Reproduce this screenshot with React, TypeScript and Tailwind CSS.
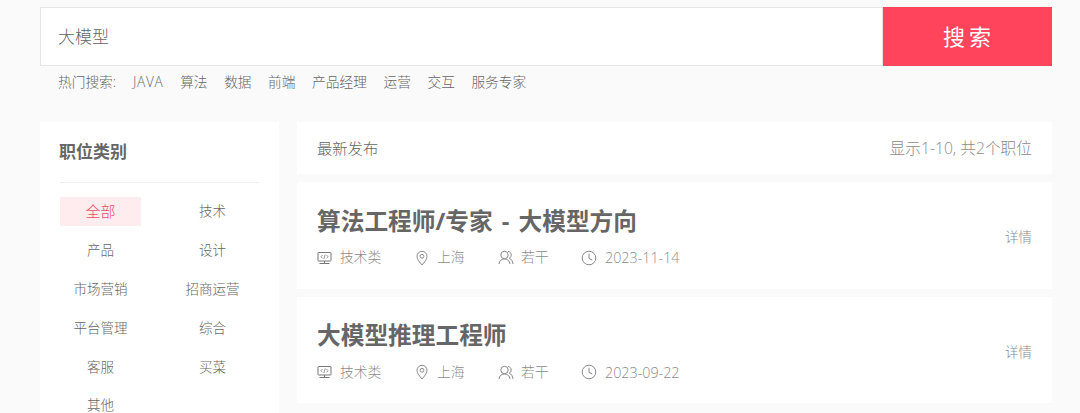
import React from 'react';

const hotWords = ['算法', '数据', '前端', '产品经理', '运营', '交互', '服务专家'];
const categories = ['全部', '技术', '产品', '设计', '市场营销', '招商运营', '平台管理', '综合', '客服', '买菜', '其他'];
const jobs = [
  { title: '算法工程师/专家 - 大模型方向', date: '2023-11-14' },
  { title: '大模型推理工程师', date: '2023-09-22' },
];

function MonitorIcon() {
  return (
    <svg width="15" height="14" viewBox="0 0 15 14" fill="none" stroke="#777" strokeWidth="1" className="mr-2 shrink-0">
      <rect x="1" y="1.5" width="13" height="8.5" rx="0.5" />
      <path d="M5.5 4 L4 5.7 L5.5 7.4 M9.5 4 L11 5.7 L9.5 7.4 M8.2 3.5 L6.8 8" strokeWidth="0.8" />
      <path d="M7.5 10 V12 M2.5 12.5 H12.5" />
    </svg>
  );
}

function PinIcon() {
  return (
    <svg width="14" height="16" viewBox="0 0 14 16" fill="none" stroke="#888" strokeWidth="1" className="mr-2 shrink-0">
      <path d="M7 15 C4.5 12 2 9.5 2 6.3 A5 5 0 0 1 12 6.3 C12 9.5 9.5 12 7 15 Z" />
      <circle cx="7" cy="6.3" r="1.9" />
    </svg>
  );
}

function UsersIcon() {
  return (
    <svg width="16" height="15" viewBox="0 0 16 15" fill="none" stroke="#888" strokeWidth="1" className="mr-[7px] shrink-0">
      <circle cx="6.5" cy="5" r="3.7" />
      <path d="M1 14 C1.4 10.8 3.4 9 6.5 9 C9.6 9 11.6 10.8 12 14" />
      <path d="M10 1.4 C12.2 1.6 13.2 3.2 13.2 5 C13.2 6.4 12.5 7.6 11.3 8.2 C13.4 9 14.7 11 15 14" />
    </svg>
  );
}

function ClockIcon() {
  return (
    <svg width="16" height="16" viewBox="0 0 16 16" fill="none" stroke="#888" strokeWidth="1" className="mr-2 shrink-0">
      <circle cx="8" cy="8" r="6.8" />
      <path d="M8 3.8 V8.4 L11.2 10" />
    </svg>
  );
}

function JobCard({ title, date }: { title: string; date: string }) {
  return (
    <div className="flex h-[106.5px] items-center justify-between bg-white pl-5 pr-[20px]">
      <div className="pt-[2px]">
        <h2 className="text-[23.7px] font-bold leading-[32px] text-[#666] [word-spacing:3px]">{title}</h2>
        <div className="mt-[11px] flex h-5 items-center text-[13.8px] text-[#8c8c8c]">
          <span className="flex w-[98px] items-center"><MonitorIcon />技术类</span>
          <span className="flex w-[83px] items-center"><PinIcon />上海</span>
          <span className="flex w-[83px] items-center"><UsersIcon />若干</span>
          <span className="flex items-center text-[14.3px]"><ClockIcon />{date}</span>
        </div>
      </div>
      <a className="relative top-[2px] text-[13.5px] text-[#8c8c8c]">详情</a>
    </div>
  );
}

export default function App() {
  return (
    <div className="h-[413px] overflow-hidden bg-[#fafafa] pl-10 pr-7 pt-[7px] font-['Open_Sans','Noto_Sans_CJK_SC',sans-serif] font-light">
      <div className="flex h-[59px]">
        <div className="flex flex-1 items-center border border-[#e5e5e5] bg-white pl-[17px] pt-px text-[17px] text-[#666]">大模型</div>
        <button className="w-[169px] bg-[#ff445c] pl-[3px] text-[22px] font-normal tracking-[4px] text-white">搜索</button>
      </div>
      <div className="flex h-[33px] items-center pl-[18px] text-[13.7px] text-[#666]">
        <span className="mr-[17px]">热门搜索:</span>
        <div className="flex gap-[16.6px]">
          <span className="tracking-[0.7px]">JAVA</span>
          {hotWords.map((w) => <span key={w}>{w}</span>)}
        </div>
      </div>

      <div className="mt-[23px] flex gap-[18px]">
        <aside className="h-[300px] w-[239px] shrink-0 bg-white px-5">
          <h3 className="flex h-[61px] items-center border-b border-[#eee] text-[17px] font-bold text-[#666]"><span className="-ml-px">职位类别</span></h3>
          <div className="mt-[14px] grid grid-cols-[81px_81px] gap-x-[31px] gap-y-[9.8px] text-center text-[13.5px] text-[#666]">
            {categories.map((c, i) => (
              <div key={c} className={i === 0 ? 'flex h-[29px] items-center justify-center bg-[#ffecef] text-[15px] text-[#e8506a]' : 'flex h-[29px] items-center justify-center'}>
                {c}
              </div>
            ))}
          </div>
        </aside>

        <main className="flex-1">
          <div className="flex h-[52px] items-center justify-between bg-white px-5 pt-px">
            <span className="text-[15.3px] text-[#666]">最新发布</span>
            <span className="text-[15.7px] text-[#8c8c8c]">显示1-10, 共2个职位</span>
          </div>
          <div className="mt-2 flex flex-col gap-2">
            {jobs.map((j) => <JobCard key={j.date} title={j.title} date={j.date} />)}
          </div>
        </main>
      </div>
    </div>
  );
}
